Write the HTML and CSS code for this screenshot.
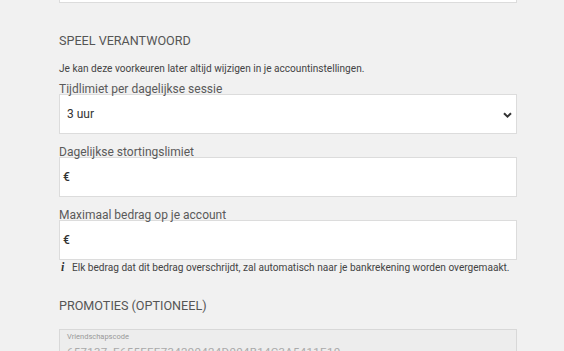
FILE: index.html
```html
<!DOCTYPE html>
<html lang="nl">
<head>
<meta charset="utf-8">
<title>Speel verantwoord</title>
<link rel="stylesheet" href="styles.css">
</head>
<body>
<main class="form">
  <div class="prev-card"></div>

  <h2 class="section-title">SPEEL VERANTWOORD</h2>
  <p class="note">Je kan deze voorkeuren later altijd wijzigen in je accountinstellingen.</p>

  <label class="field-label">Tijdlimiet per dagelijkse sessie</label>
  <div class="select-box">
    <span class="select-value">3 uur</span>
    <svg class="chevron" width="9" height="6" viewBox="0 0 9 6"><path d="M1 1.2 L4.5 4.6 L8 1.2" fill="none" stroke="#333" stroke-width="2"/></svg>
  </div>

  <label class="field-label spaced">Dagelijkse stortingslimiet</label>
  <div class="input-box"><span class="currency">€</span></div>

  <label class="field-label spaced">Maximaal bedrag op je account</label>
  <div class="input-box"><span class="currency">€</span></div>

  <p class="info"><span class="info-icon">i</span>Elk bedrag dat dit bedrag overschrijdt, zal automatisch naar je bankrekening worden overgemaakt.</p>

  <h2 class="section-title promo-title">PROMOTIES (OPTIONEEL)</h2>

  <div class="promo-box">
    <div class="promo-label">Vriendschapscode</div>
    <div class="promo-value">657137_E655EEE734290424D004B14C3A5411E10</div>
  </div>
</main>
</body>
</html>
```
FILE: styles.css
```css
html, body {
  margin: 0;
  padding: 0;
}
body {
  background: #f1f1f1;
  font-family: Roboto, "Liberation Sans", Arial, sans-serif;
  color: #555;
  overflow: hidden;
  height: 351px;
}
.form {
  width: 458px;
  margin-left: 59px;
}
.prev-card {
  height: 40px;
  margin-top: -37px;
  background: #fff;
  border: 1px solid #dcdcdc;
  box-sizing: border-box;
}
.section-title {
  margin: 30px 0 0;
  font-size: 12.6px;
  line-height: 16px;
  font-weight: 400;
  color: #555;
}
.note {
  margin: 14px 0 0;
  font-size: 10.1px;
  line-height: 12px;
  color: #444;
}
.field-label {
  display: block;
  margin-top: 8px;
  margin-bottom: -2px;
  font-size: 12px;
  line-height: 13px;
  color: #5a5a5a;
}
.field-label.spaced {
  margin-top: 12px;
}
.select-box,
.input-box {
  height: 40px;
  box-sizing: border-box;
  background: #fff;
  border: 1px solid #dcdcdc;
  display: flex;
  align-items: center;
}
.select-box {
  justify-content: space-between;
  padding: 0 4px 0 7px;
}
.select-value {
  font-size: 12px;
  color: #333;
}
.chevron {
  display: block;
  margin-top: 1px;
}
.input-box {
  padding: 0 3px;
}
.currency {
  font-size: 12px;
  font-weight: 500;
  color: #333;
}
.info {
  margin: 1px 0 0;
  font-size: 10.1px;
  line-height: 12px;
  color: #444;
  white-space: nowrap;
}
.info-icon {
  display: inline-block;
  width: 11px;
  font-family: "Liberation Serif", "DejaVu Serif", serif;
  font-style: italic;
  font-weight: 700;
  font-size: 12px;
  color: #333;
  margin-left: 2px;
}
.promo-title {
  margin-top: 24px;
}
.promo-box {
  margin-top: 15px;
  height: 40px;
  box-sizing: border-box;
  background: #ededed;
  border: 1px solid #d8d8d8;
  padding: 2px 7px 0;
}
.promo-label {
  font-size: 7.5px;
  line-height: 10px;
  color: #999;
}
.promo-value {
  margin-top: 3px;
  font-size: 11.5px;
  line-height: 14px;
  color: #aaa;
  letter-spacing: 0.3px;
}
```
